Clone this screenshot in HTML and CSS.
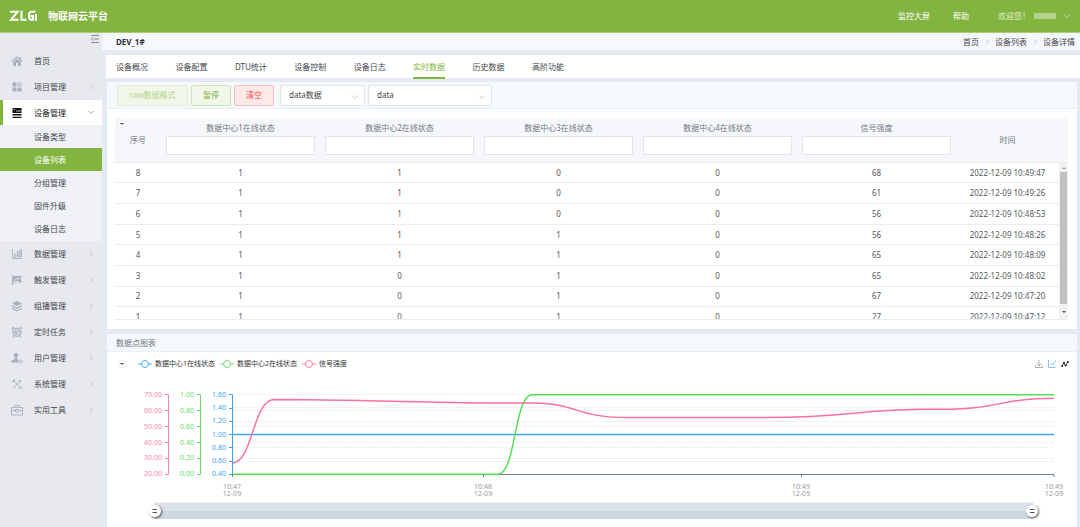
FILE: index.html
```html
<!DOCTYPE html>
<html lang="zh-CN">
<head>
<meta charset="utf-8">
<meta name="viewport" content="width=device-width, initial-scale=1">
<title>物联网云平台</title>
<link rel="stylesheet" href="styles.css">
</head>
<body>
<header class="topbar">
  <svg class="logo" viewBox="0 0 28 12" role="img" aria-label="ZLG"><path d="M1 1.800H8.500L2 9.800H9.500M12.500 .8V9.800H17.500M26.500 1.800H22.500Q20 1.800 20 5.800T22.500 9.800H24V6H21.500M27 4V10.800"/></svg>
  <h1 class="brand">物联网云平台</h1>
  <nav class="toplinks"><a href="#">监控大屏</a><a href="#">帮助</a>
    <button class="user" type="button">欢迎您！<span class="mask"></span><svg class="chev" viewBox="0 0 8 8"><path d="M1 2.5 4 5.5 7 2.5"/></svg></button>
  </nav>
</header>
<div class="shell">
  <aside class="sidebar">
    <button class="fold" type="button" aria-label="收起菜单"><svg viewBox="0 0 8 8"><path d="M0 .5H8M3 4H8M0 7.5H8M2 2.5 .5 4 2 5.5"/></svg></button>
    <nav class="menu">
      <a class="item" href="#"><svg class="ico" viewBox="0 0 12 12"><path class="f" d="M6 1 .3 6.2l.8.8L6 2.7 10.900 7l.8-.8L10 4.600V2H8.500v1.300zM6 3.800 2.200 7.100V11H5V8h2v3h2.800V7.100z"/></svg><span>首页</span></a>
      <a class="item" href="#"><svg class="ico" viewBox="0 0 12 12"><path class="f" d="M1.500 1.500h4v4h-4zM1.500 6.500h4v4h-4zM6.500 6.500h4v4h-4z"/><path d="M7 2h3v3H7z"/></svg><span>项目管理</span><svg class="chev" viewBox="0 0 8 8"><path d="M3 1.500 5.500 4 3 6.500"/></svg></a>
      <a class="item open" href="#"><svg class="ico" viewBox="0 0 12 12"><path class="f" d="M1.500 1h9v5h-9zM1.500 7.100h9v1.300h-9zM1.500 9.700h9V11h-9z"/><path class="cut" d="M2.500 2.500H4M5 4H10"/></svg><span>设备管理</span><svg class="chev" viewBox="0 0 8 8"><path d="M1.500 2 4 4.500 6.500 2"/></svg></a>
      <div class="sub"><a href="#">设备类型</a><a class="on" href="#">设备列表</a><a href="#">分组管理</a><a href="#">固件升级</a><a href="#">设备日志</a></div>
      <a class="item" href="#"><svg class="ico" viewBox="0 0 12 12"><path d="M1.500 1V10.500H11M3.500 6H5v3H3.500zM6.500 3.500H8V9H6.500zM9.200 1.500h1.300V9H9.200z"/></svg><span>数据管理</span><svg class="chev" viewBox="0 0 8 8"><path d="M3 1.500 5.500 4 3 6.500"/></svg></a>
      <a class="item" href="#"><svg class="ico" viewBox="0 0 12 12"><path class="f" d="M1 1.500h1.300V11H1zM2.500 2H11L9.700 5 11 8.500H2.500z"/><path class="cut" d="M4 6 6 4 7 5.500 9 3.500M3 7.500H8"/></svg><span>触发管理</span><svg class="chev" viewBox="0 0 8 8"><path d="M3 1.500 5.500 4 3 6.500"/></svg></a>
      <a class="item" href="#"><svg class="ico" viewBox="0 0 12 12"><path class="f" d="M6 1 11 3.500 6 6 1 3.500zM1 5l5 2.500L11 5v1.500L6 9 1 6.500zM1 7.700l5 2.500 5-2.500v1.200L6 11.500 1 8.900z"/></svg><span>组播管理</span><svg class="chev" viewBox="0 0 8 8"><path d="M3 1.500 5.500 4 3 6.500"/></svg></a>
      <a class="item" href="#"><svg class="ico" viewBox="0 0 12 12"><circle class="f" cx="6" cy="6.300" r="4.600"/><circle class="cut" cx="6" cy="6.300" r="2.900"/><path class="cut" d="M6 4.500V6.800H7.800"/><path d="M1 3 3 1M9 1l2 2M3 10 2 11.500M9 10l1 1.500" stroke-width="1.300"/></svg><span>定时任务</span><svg class="chev" viewBox="0 0 8 8"><path d="M3 1.500 5.500 4 3 6.500"/></svg></a>
      <a class="item" href="#"><svg class="ico" viewBox="0 0 12 12"><circle class="f" cx="5" cy="3.200" r="2.300"/><path class="f" d="M4 5h2v2l1.500.8V10.500H.5V8.500L4 7z"/><circle cx="9.800" cy="9.500" r="1.500"/></svg><span>用户管理</span><svg class="chev" viewBox="0 0 8 8"><path d="M3 1.500 5.500 4 3 6.500"/></svg></a>
      <a class="item" href="#"><svg class="ico" viewBox="0 0 12 12"><path d="M3.500 3.500 10 10.500M10 2 2 10.500"/><path d="M1.500 4 4 1.500M8 2.500 9.500 4M8.500 10.500 10.500 9" stroke-width="1.400"/></svg><span>系统管理</span><svg class="chev" viewBox="0 0 8 8"><path d="M3 1.500 5.500 4 3 6.500"/></svg></a>
      <a class="item" href="#"><svg class="ico" viewBox="0 0 12 12"><path d="M.5 3.500h11v7.500H.5zM3.500 3.500v-2h5v2M.5 6.500H4.500M7.500 6.500h4M4.500 5.500h3v2.500h-3z"/></svg><span>实用工具</span><svg class="chev" viewBox="0 0 8 8"><path d="M3 1.500 5.500 4 3 6.500"/></svg></a>
    </nav>
  </aside>
  <main class="main">
    <div class="crumbbar">
      <h2>DEV_1#</h2>
      <nav class="crumbs"><a href="#">首页</a><svg class="chev" viewBox="0 0 8 8"><path d="M3 1.500 5.500 4 3 6.500"/></svg><a href="#">设备列表</a><svg class="chev" viewBox="0 0 8 8"><path d="M3 1.500 5.500 4 3 6.500"/></svg><a href="#">设备详情</a></nav>
    </div>
    <div class="tabbar"><nav class="tabs"><a href="#">设备概况</a><a href="#">设备配置</a><a href="#">DTU统计</a><a href="#">设备控制</a><a href="#">设备日志</a><a class="on" href="#">实时数据</a><a href="#">历史数据</a><a href="#">高阶功能</a></nav></div>
    <section class="panel">
      <div class="toolbar">
        <button class="btn raw" type="button" disabled>raw数据格式</button>
        <button class="btn" type="button">暂停</button>
        <button class="btn clear" type="button">清空</button>
        <label class="pick"><select aria-label="数据类型"><option>data数据</option></select><svg class="chev" viewBox="0 0 8 8"><path d="M1 2.500 4 5.500 7 2.500"/></svg></label>
        <label class="pick wide"><select aria-label="数据名称"><option>data</option></select><svg class="chev" viewBox="0 0 8 8"><path d="M1 2.500 4 5.500 7 2.500"/></svg></label>
      </div>
      <div class="tablebox">
        <div class="thead">
          <button class="drop corner" type="button" aria-label="选择列"></button>
          <table class="grid">
            <colgroup><col class="c-no"><col><col><col><col><col><col class="c-time"></colgroup>
            <thead><tr>
              <th>序号</th>
              <th><label>数据中心1在线状态<input type="text"></label></th>
              <th><label>数据中心2在线状态<input type="text"></label></th>
              <th><label>数据中心3在线状态<input type="text"></label></th>
              <th><label>数据中心4在线状态<input type="text"></label></th>
              <th><label>信号强度<input type="text"></label></th>
              <th>时间</th>
            </tr></thead>
          </table>
        </div>
        <div class="scroll">
          <div class="rows">
          <table class="grid body">
            <colgroup><col class="c-no"><col><col><col><col><col><col class="c-time"></colgroup>
            <tbody>
              <tr><td>8</td><td>1</td><td>1</td><td>0</td><td>0</td><td>68</td><td>2022-12-09 10:49:47</td></tr>
              <tr><td>7</td><td>1</td><td>1</td><td>0</td><td>0</td><td>61</td><td>2022-12-09 10:49:26</td></tr>
              <tr><td>6</td><td>1</td><td>1</td><td>0</td><td>0</td><td>56</td><td>2022-12-09 10:48:53</td></tr>
              <tr><td>5</td><td>1</td><td>1</td><td>1</td><td>0</td><td>56</td><td>2022-12-09 10:48:26</td></tr>
              <tr><td>4</td><td>1</td><td>1</td><td>1</td><td>0</td><td>65</td><td>2022-12-09 10:48:09</td></tr>
              <tr><td>3</td><td>1</td><td>0</td><td>1</td><td>0</td><td>65</td><td>2022-12-09 10:48:02</td></tr>
              <tr><td>2</td><td>1</td><td>0</td><td>1</td><td>0</td><td>67</td><td>2022-12-09 10:47:20</td></tr>
              <tr><td>1</td><td>1</td><td>0</td><td>1</td><td>0</td><td>27</td><td>2022-12-09 10:47:12</td></tr>
            </tbody>
          </table>
          </div>
          <div class="bar"><i class="up"></i><i class="thumb"></i><i class="down"></i></div>
        </div>
      </div>
    </section>
    <section class="panel chartpanel">
      <h3>数据点图表</h3>
      <div class="legend">
        <button class="drop" type="button" aria-label="选择数据点"></button>
        <span class="key blue"><svg viewBox="0 0 14 8"><path d="M0 4H14"/><circle cx="7" cy="4" r="3.500"/></svg>数据中心1在线状态</span>
        <span class="key green"><svg viewBox="0 0 14 8"><path d="M0 4H14"/><circle cx="7" cy="4" r="3.500"/></svg>数据中心2在线状态</span>
        <span class="key pink"><svg viewBox="0 0 14 8"><path d="M0 4H14"/><circle cx="7" cy="4" r="3.500"/></svg>信号强度</span>
        <span class="tools">
          <svg class="t-save" viewBox="0 0 8 8"><path d="M4 0V5.500M1.500 3.500 4 5.800 6.500 3.500M.5 5.500V7.500H7.500V5.500"/></svg>
          <svg class="t-line" viewBox="0 0 8 8"><path d="M.5 0V7.500H7.500M2 5 3.500 3.500 5 5 7.500 .5"/></svg>
          <svg class="t-dots" viewBox="0 0 8 8"><path d="M1 6.500 3 2.500 4.500 6 7 1.500"/><circle cx="1.200" cy="6" r="1"/><circle cx="3" cy="3" r="1"/><circle cx="4.700" cy="5.500" r="1"/><circle cx="6.800" cy="2" r="1"/></svg>
        </span>
      </div>
      <svg class="chart" viewBox="107 376 970 151" role="img" aria-label="数据点图表">
        <g class="gridlines"><path d="M233 394.500H1054M233 407.500H1054M233 410.500H1054M233 421.500H1054M233 426.500H1054M233 442.500H1054M233 447.500H1054M233 458.500H1054M233 461.500H1054"/></g>
        <g class="axis pink"><path d="M165 394.500H168.500V474.500H165M165 410.500H168M165 426.500H168M165 442.500H168M165 458.500H168"/><text x="162" y="397">70.00</text><text x="162" y="413">60.00</text><text x="162" y="429">50.00</text><text x="162" y="445">40.00</text><text x="162" y="460">30.00</text><text x="162" y="476">20.00</text></g>
        <g class="axis green"><path d="M197 394.500H200.500V474.500H197M197 410.500H200M197 426.500H200M197 442.500H200M197 458.500H200"/><text x="194" y="397">1.00</text><text x="194" y="413">0.80</text><text x="194" y="429">0.60</text><text x="194" y="445">0.40</text><text x="194" y="460">0.20</text><text x="194" y="476">0.00</text></g>
        <g class="axis blue"><path d="M229 394.500H232.500V474.500H229M229 408.500H232M229 421.500H232M229 434.500H232M229 447.500H232M229 461.500H232"/><text x="226" y="397">1.60</text><text x="226" y="410">1.40</text><text x="226" y="423">1.20</text><text x="226" y="437">1.00</text><text x="226" y="450">0.80</text><text x="226" y="463">0.60</text><text x="226" y="476">0.40</text></g>
        <path class="base" d="M232.500 477V474.500H1054V477M483.500 474V477M801.500 474V477"/>
        <g class="xlab"><text x="232" y="489">10:47</text><text x="232" y="496">12-09</text><text x="483" y="489">10:48</text><text x="483" y="496">12-09</text><text x="801" y="489">10:49</text><text x="801" y="496">12-09</text><text x="1054" y="489">10:49</text><text x="1054" y="496">12-09</text></g>
        <path class="series blue" d="M233 434.500H1054"/>
        <path class="series green" d="M233 474.200H498C516 474.200 514 394.800 532 394.800H1054"/>
        <path class="series pink" d="M233 463C253 461 253 400 274 399.500C340 399.500 450 403 500 403H532C577 403 577 417.500 625 417.500H765C850 417.500 860 409.300 925 409.300H942C1000 409.300 1000 398.300 1054 398.300"/>
        <g class="track"><rect x="154" y="502.500" width="879" height="9" fill="#dae1eb"/><rect x="154" y="511" width="879" height="8" fill="#ced6e0"/></g>
        <g class="handle"><circle cx="155" cy="511" r="6"/><path d="M152.500 509.500H157M152.500 512.500H157"/><circle cx="1032" cy="511" r="6"/><path d="M1030 509.500H1034.500M1030 512.500H1034.500"/></g>
      </svg>
    </section>
  </main>
</div>
</body>
</html>
```
FILE: styles.css
```css
* { box-sizing: border-box; }
body { margin: 0; min-height: 100vh; display: flex; flex-direction: column; background: #e4eaf2; color: #44474d; font: 8px/12px "Noto Sans", "Noto Sans CJK SC", sans-serif; }
a { color: inherit; text-decoration: none; }
button, input, select { font: inherit; color: inherit; margin: 0; }
h1, h2, h3 { margin: 0; }
svg { display: block; fill: none; stroke: currentColor; flex: none; }
.chev { width: 8px; height: 8px; stroke: #b4b8c0; stroke-width: .8; }

.topbar { height: 33px; display: flex; align-items: center; padding: 0 9px; background: #82b440; border-bottom: 1px solid #a9cc7c; color: #fff; }
.logo { width: 28px; height: 12px; stroke-width: 2; }
.brand { margin-left: 11px; font-size: 10px; line-height: 16px; font-weight: 700; }
.toplinks { margin-left: auto; display: flex; align-items: center; gap: 23px; }
.user { display: flex; align-items: center; padding: 0; margin-left: 6px; border: 0; background: none; color: #e3f0d2; }
.mask { width: 22px; height: 6px; margin: 0 7px 0 4px; background: #b4d18d; }
.user .chev { stroke: #e3f0d2; }

.shell { flex: 1; display: flex; }
.sidebar { width: 102px; flex: none; background: #e7e9ee; }
.fold { display: block; margin-left: auto; padding: 2px 3px 5px 0; border: 0; background: none; color: #70757d; }
.fold svg { width: 8px; height: 8px; stroke-width: .8; }
.item { height: 26px; display: flex; align-items: center; padding: 0 7px 0 11px; }
.ico { width: 12px; height: 12px; margin-right: 11px; color: #a9b0bc; stroke-width: .9; }
.ico .f { fill: currentColor; stroke: none; }
.ico .cut { stroke: #fff; stroke-width: .7; }
.item .chev { margin-left: auto; }
.item.open { background: #fff; padding-left: 8px; border-left: 3px solid #82b440; color: #222; }
.item.open .ico { color: #111; }
.item.open .chev { stroke: #8d9299; }
.sub { margin-top: -1px; padding-bottom: 1px; background: #eff1f6; }
.sub a { display: block; padding-left: 34px; line-height: 23px; }
.sub .on { background: #82b440; color: #fff; }

.main { flex: 1; min-width: 0; display: flex; flex-direction: column; }
.crumbbar { height: 17px; display: flex; align-items: center; justify-content: space-between; padding: 0 5px 0 14px; background: #f5f8fc; }
.crumbbar h2 { font-size: 8px; color: #303338; }
.crumbs { display: flex; align-items: center; gap: 4px; }
.tabbar { margin: 5px 0 4px 4px; padding-left: 10px; background: #fff; }
.tabs { max-width: 448px; display: flex; justify-content: space-between; }
.tabs a { padding-top: 1px; line-height: 21px; border-bottom: 2px solid transparent; margin-bottom: -1px; }
.tabs .on { color: #82b440; border-color: #82b440; }
.panel { margin: 0 3px 5px 5px; background: #fff; }
.toolbar { display: flex; align-items: center; gap: 3px; height: 27px; padding: 0 10px; background: #f5f8fc; border-bottom: 1px solid #e9eef5; }
.btn { height: 21px; width: 40px; padding: 0; border: 1px solid #cfe3b6; border-radius: 2px; background: #f0f6e8; color: #82b440; }
.btn.raw { width: 71px; border-color: #e2efd3; color: #b4d38e; }
.btn.clear { border-color: #fbc0c0; background: #fee8e8; color: #f55050; }
.pick { position: relative; width: 85px; margin-left: 3px; }
.pick.wide { width: 124px; margin-left: 0; }
.pick select { display: block; width: 100%; height: 21px; padding: 0 8px; appearance: none; border: 1px solid #e0e5ed; border-radius: 2px; background: #fff; }
.pick .chev { position: absolute; right: 6px; top: 8px; pointer-events: none; }
.tablebox { padding: 9px 9px 9px 8px; }
.thead { position: relative; padding-right: 9px; background: #f5f7fb; border-bottom: 1px solid #e8edf5; }
.grid { width: 100%; table-layout: fixed; border-collapse: collapse; text-align: center; }
.c-no { width: 46px; }
.c-time { width: 103px; }
.grid th { height: 44px; padding: 0 5px; font-weight: 400; color: #73777e; }
.grid th label { display: block; padding-bottom: 3px; }
.grid th input { display: block; width: 100%; height: 19px; margin: 2px 0 0; border: 1px solid #e2e6ec; background: #fff; }
.drop { width: 8px; height: 8px; padding: 0; display: grid; place-items: center; border: 1px solid #edf0f4; background: #fff; }
.drop::before { content: ""; border: 2px solid transparent; border-top-color: #555; border-bottom: 0; }
.corner { position: absolute; left: 3px; top: 2px; }
.scroll { display: flex; height: 157px; overflow: hidden; border-bottom: 1px solid #e8edf5; }
.rows { flex: 1; }
.grid.body { height: 165px; }
.grid td { padding: 0; border-bottom: 1px solid #e8edf5; color: #55585e; line-height: 12px; }
.bar { width: 9px; display: flex; flex-direction: column; align-items: center; background: #f1f1f1; }
.bar .thumb { width: 7px; flex: 1; background: #c1c1c1; }
.up, .down { height: 9px; display: grid; place-items: center; }
.down { height: 15px; }
.up::before, .down::before { content: ""; border: 2px solid transparent; }
.up::before { border-bottom-color: #999; border-top: 0; }
.down::before { border-top-color: #505050; border-bottom: 0; }

.chartpanel { flex: 1; margin-bottom: 0; }
.chartpanel h3 { height: 18px; padding-left: 9px; font-size: 8px; line-height: 18px; font-weight: 400; color: #73777e; background: #f5f8fc; border-bottom: 1px solid #e9eef5; }
.legend { height: 24px; display: flex; align-items: center; padding: 0 8px 0 11px; }
.legend .drop { margin-right: 12px; }
.key { display: flex; align-items: center; gap: 3px; margin-right: 5px; font-size: 7px; color: #333; }
.key svg { width: 14px; height: 8px; }
.key circle { fill: #fff; }
.key.blue svg { stroke: #4ba9f5; }
.key.green svg { stroke: #6fe070; }
.key.pink svg { stroke: #fb7faa; }
.tools { display: flex; gap: 5px; margin-left: auto; }
.tools svg { width: 8px; height: 8px; stroke-width: .8; }
.t-save { color: #999; }
.t-line { color: #65b3f2; }
.t-dots { color: #222; }
.t-dots circle { fill: currentColor; stroke: none; }
.chart { width: 100%; font-size: 7px; }
.chart text { stroke: none; fill: currentColor; }
.axis text { text-anchor: end; }
.axis.pink { color: #fb85ae; }
.axis.green { color: #66dd66; }
.axis.blue { color: #3fa2f3; }
.gridlines { stroke: #ededed; stroke-dasharray: 2 1; }
.base { stroke: #6e7f92; }
.xlab { color: #999; text-anchor: middle; }
.series { stroke-width: 1.400; }
.series.blue { stroke: #3ea6fa; }
.series.green { stroke: #52e052; }
.series.pink { stroke: #fb6fa1; }
.track { stroke: none; }
.handle circle { fill: #fff; stroke: none; filter: drop-shadow(1px 1px 1px #555); }
.handle path { stroke: #555; }
```
